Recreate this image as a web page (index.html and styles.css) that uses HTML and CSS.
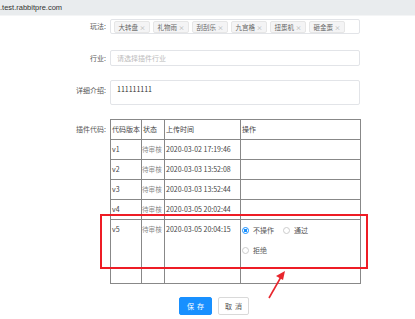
FILE: index.html
```html
<!DOCTYPE html>
<html lang="zh">

<head>
      <meta charset="UTF-8">
      <meta name="viewport" content="width=device-width, initial-scale=1.0">
      <title>插件审核</title>
      <link rel="stylesheet" href="styles.css">
</head>

<body>
      <div class="urlbar">.test.rabbitpre.com</div>

      <div class="page">
            <div class="row">
                  <label class="label label-tags">玩法:</label>
                  <div class="tags">
                        <span class="tag">大转盘 <i>×</i></span>
                        <span class="tag">礼物雨 <i>×</i></span>
                        <span class="tag">刮刮乐 <i>×</i></span>
                        <span class="tag">九宫格 <i>×</i></span>
                        <span class="tag">扭蛋机 <i>×</i></span>
                        <span class="tag">砸金蛋 <i>×</i></span>
                  </div>
            </div>

            <div class="row">
                  <label class="label label-input" for="industry">行业:</label>
                  <input class="field" type="text" id="industry" placeholder="请选择插件行业">
            </div>

            <div class="row">
                  <label class="label label-tall" for="desc">详细介绍:</label>
                  <textarea class="field area" id="desc">111111111</textarea>
            </div>

            <div class="row">
                  <label class="label label-tall">插件代码:</label>
                  <table class="codes">
                        <colgroup>
                              <col class="c-ver">
                              <col class="c-state">
                              <col class="c-time">
                              <col class="c-op">
                        </colgroup>
                        <tr>
                              <td>代码版本</td>
                              <td>状态</td>
                              <td>上传时间</td>
                              <td>操作</td>
                        </tr>
                        <tr>
                              <td>v1</td>
                              <td class="muted">待审核</td>
                              <td>2020-03-02 17:19:46</td>
                              <td></td>
                        </tr>
                        <tr>
                              <td>v2</td>
                              <td class="muted">待审核</td>
                              <td>2020-03-03 13:52:08</td>
                              <td></td>
                        </tr>
                        <tr>
                              <td>v3</td>
                              <td class="muted">待审核</td>
                              <td>2020-03-03 13:52:44</td>
                              <td></td>
                        </tr>
                        <tr>
                              <td>v4</td>
                              <td class="muted">待审核</td>
                              <td>2020-03-05 20:02:44</td>
                              <td></td>
                        </tr>
                        <tr class="last">
                              <td>v5</td>
                              <td class="muted">待审核</td>
                              <td>2020-03-05 20:04:15</td>
                              <td>
                                    <div class="radios">
                                          <label class="radio"><span class="dot on"></span>不操作</label>
                                          <label class="radio"><span class="dot"></span>通过</label>
                                    </div>
                                    <div class="radios">
                                          <label class="radio"><span class="dot"></span>拒绝</label>
                                    </div>
                              </td>
                        </tr>
                  </table>
            </div>

            <div class="actions">
                  <button class="btn btn-primary">保存</button>
                  <button class="btn">取消</button>
            </div>

            <!-- 标注框和箭头 -->
            <div class="mark"></div>
            <svg class="arrow" width="30" height="36" viewBox="0 0 30 36">
                  <line x1="7" y1="32" x2="19" y2="11" stroke="#e8262d" stroke-width="1.6" />
                  <polygon points="23,5 14,10 21,14" fill="#e8262d" />
            </svg>
      </div>
</body>

</html>
```

FILE: styles.css
```css
body {
      margin: 0;
      background-color: #fff;
      font-family: "Noto Sans CJK SC", "Noto Sans", sans-serif;
      font-size: 7px;
      color: #555;
}

.urlbar {
      height: 15px;
      line-height: 15px;
      background-color: #e9ecee;
      border-bottom: 1px solid #f4f5f6;
      color: #333;
      font-family: "Liberation Sans", sans-serif;
      font-size: 7.5px;
}

.page {
      position: relative;
      padding-top: 3px;
}

.row {
      display: flex;
      align-items: flex-start;
      margin-bottom: 16px;
}

.label {
      width: 106px;
      margin-right: 4px;
      text-align: right;
      color: #555;
      flex: none;
}

.label-tags {
      line-height: 15px;
}

.label-input {
      line-height: 16px;
}

.label-tall {
      line-height: 20px;
}

.tags {
      width: 250px;
      height: 15px;
      box-sizing: border-box;
      border: 1px solid #e2e4e8;
      border-radius: 2px;
      display: flex;
      align-items: center;
      gap: 3px;
      padding-left: 3px;
}

.tag {
      height: 10px;
      line-height: 10px;
      padding: 0 3.5px;
      background-color: #f4f4f5;
      border: 1px solid #e6e6e6;
      border-radius: 2px;
      color: #666;
      font-size: 6.5px;
      white-space: nowrap;
}

.tag i {
      font-style: normal;
      color: #aaa;
      font-size: 6px;
}

.field {
      width: 250px;
      height: 16px;
      box-sizing: border-box;
      border: 1px solid #e2e4e8;
      border-radius: 2px;
      padding: 0 6px;
      font-family: "Noto Sans CJK SC", sans-serif;
      font-size: 7px;
      color: #333;
      outline: none;
      margin: 0;
}

.field::placeholder {
      color: #bbb;
}

.area {
      height: 25px;
      padding: 3px 6px;
      resize: none;
      line-height: 10px;
      display: block;
}

.row:nth-child(2) {
      margin-bottom: 14px;
}

.row:nth-child(3) {
      margin-bottom: 14px;
}

.row:nth-child(4) {
      margin-bottom: 13px;
}

.codes {
      border-collapse: collapse;
      width: 250px;
      table-layout: fixed;
      border: 1px solid #888;
      color: #444;
}

.c-ver {
      width: 31px;
}

.c-state {
      width: 23px;
}

.c-time {
      width: 76px;
}

.c-op {
      width: 120px;
}

.codes td {
      border: 1px solid #888;
      height: 19px;
      padding: 0 0 0 1px;
      line-height: 19px;
      vertical-align: top;
      white-space: nowrap;
      overflow: hidden;
}

.codes .muted {
      color: #888;
      padding: 0;
      font-size: 6.6px;
}

.codes .last td {
      height: 63px;
}

.radios {
      display: flex;
      height: 20px;
      align-items: center;
      gap: 9px;
      line-height: 20px;
}

.radio {
      display: flex;
      align-items: center;
      gap: 4px;
      color: #555;
}

.dot {
      width: 7px;
      height: 7px;
      box-sizing: border-box;
      border: 1px solid #ccc;
      border-radius: 50%;
      background-color: #fff;
}

.dot.on {
      border-color: #1890ff;
      background: radial-gradient(circle, #1890ff 0 1.6px, #fff 2px);
}

.actions {
      display: flex;
      gap: 6px;
      padding-left: 179px;
}

.btn {
      width: 31px;
      height: 18px;
      padding: 0;
      border: 1px solid #d9d9d9;
      border-radius: 2px;
      background-color: #fff;
      color: #555;
      font-family: "Noto Sans CJK SC", sans-serif;
      font-size: 7px;
      letter-spacing: 3px;
      text-indent: 3px;
}

.btn-primary {
      width: 33px;
      background-color: #1890ff;
      border-color: #1890ff;
      color: #fff;
}

.mark {
      position: absolute;
      left: 100px;
      top: 198px;
      width: 268px;
      height: 55px;
      box-sizing: border-box;
      border: 2px solid #ee1c25;
}

.arrow {
      position: absolute;
      left: 262px;
      top: 250px;
}
```
